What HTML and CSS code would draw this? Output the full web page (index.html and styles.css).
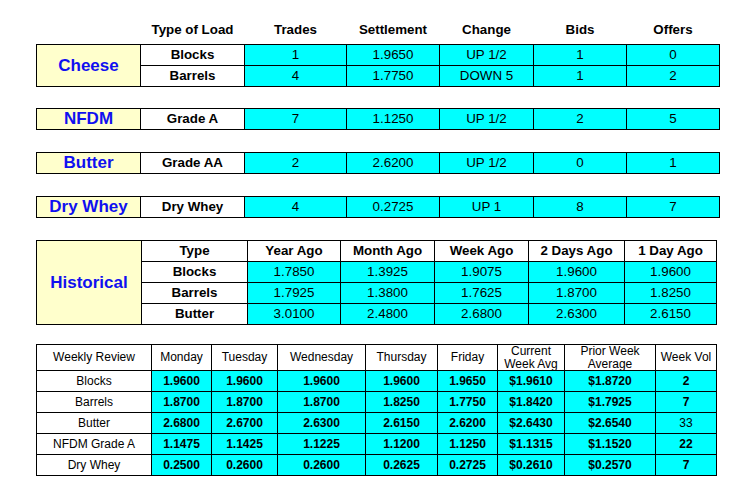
FILE: index.html
```html
<!DOCTYPE html>
<html>
<head>
<meta charset="utf-8">
<link rel="stylesheet" href="styles.css">
</head>
<body>
<div class="page">
  <table class="market">
    <colgroup>
      <col class="c-label"><col class="c-type"><col class="c-trades"><col class="c-settle"><col class="c-change"><col class="c-bids"><col class="c-offers">
    </colgroup>
    <thead>
      <tr class="head">
        <th></th><th>Type of Load</th><th>Trades</th><th>Settlement</th><th>Change</th><th>Bids</th><th>Offers</th>
      </tr>
    </thead>
    <tbody>
      <tr>
        <td class="label" rowspan="2">Cheese</td><td class="type">Blocks</td><td class="val">1</td><td class="val">1.9650</td><td class="val">UP 1/2</td><td class="val">1</td><td class="val">0</td>
      </tr>
      <tr>
        <td class="type">Barrels</td><td class="val">4</td><td class="val">1.7750</td><td class="val">DOWN 5</td><td class="val">1</td><td class="val">2</td>
      </tr>
    </tbody>
  </table>

  <table class="market gap first">
    <colgroup>
      <col class="c-label"><col class="c-type"><col class="c-trades"><col class="c-settle"><col class="c-change"><col class="c-bids"><col class="c-offers">
    </colgroup>
    <tr>
      <td class="label">NFDM</td><td class="type">Grade A</td><td class="val">7</td><td class="val">1.1250</td><td class="val">UP 1/2</td><td class="val">2</td><td class="val">5</td>
    </tr>
  </table>

  <table class="market gap">
    <colgroup>
      <col class="c-label"><col class="c-type"><col class="c-trades"><col class="c-settle"><col class="c-change"><col class="c-bids"><col class="c-offers">
    </colgroup>
    <tr>
      <td class="label">Butter</td><td class="type">Grade AA</td><td class="val">2</td><td class="val">2.6200</td><td class="val">UP 1/2</td><td class="val">0</td><td class="val">1</td>
    </tr>
  </table>

  <table class="market gap">
    <colgroup>
      <col class="c-label"><col class="c-type"><col class="c-trades"><col class="c-settle"><col class="c-change"><col class="c-bids"><col class="c-offers">
    </colgroup>
    <tr>
      <td class="label">Dry Whey</td><td class="type">Dry Whey</td><td class="val">4</td><td class="val">0.2725</td><td class="val">UP 1</td><td class="val">8</td><td class="val">7</td>
    </tr>
  </table>

  <table class="market hist gap">
    <colgroup>
      <col class="h-label"><col class="h-type"><col class="h-year"><col class="h-month"><col class="h-week"><col class="h-two"><col class="h-one">
    </colgroup>
    <tr>
      <td class="label" rowspan="4">Historical</td><th class="type">Type</th><th class="type">Year Ago</th><th class="type">Month Ago</th><th class="type">Week Ago</th><th class="type">2 Days Ago</th><th class="type">1 Day Ago</th>
    </tr>
    <tr>
      <td class="type">Blocks</td><td class="val">1.7850</td><td class="val">1.3925</td><td class="val">1.9075</td><td class="val">1.9600</td><td class="val">1.9600</td>
    </tr>
    <tr>
      <td class="type">Barrels</td><td class="val">1.7925</td><td class="val">1.3800</td><td class="val">1.7625</td><td class="val">1.8700</td><td class="val">1.8250</td>
    </tr>
    <tr>
      <td class="type">Butter</td><td class="val">3.0100</td><td class="val">2.4800</td><td class="val">2.6800</td><td class="val">2.6300</td><td class="val">2.6150</td>
    </tr>
  </table>

  <table class="weekly">
    <colgroup>
      <col class="w-label"><col class="w-mon"><col class="w-tue"><col class="w-wed"><col class="w-thu"><col class="w-fri"><col class="w-cur"><col class="w-prior"><col class="w-vol">
    </colgroup>
    <tr class="whead">
      <th>Weekly Review</th><th>Monday</th><th>Tuesday</th><th>Wednesday</th><th>Thursday</th><th>Friday</th><th>Current<br>Week Avg</th><th>Prior Week<br>Average</th><th>Week Vol</th>
    </tr>
    <tr>
      <td class="wl">Blocks</td><td class="wv">1.9600</td><td class="wv">1.9600</td><td class="wv">1.9600</td><td class="wv">1.9600</td><td class="wv">1.9650</td><td class="wv">$1.9610</td><td class="wv">$1.8720</td><td class="wv">2</td>
    </tr>
    <tr>
      <td class="wl">Barrels</td><td class="wv">1.8700</td><td class="wv">1.8700</td><td class="wv">1.8700</td><td class="wv">1.8250</td><td class="wv">1.7750</td><td class="wv">$1.8420</td><td class="wv">$1.7925</td><td class="wv">7</td>
    </tr>
    <tr>
      <td class="wl">Butter</td><td class="wv">2.6800</td><td class="wv">2.6700</td><td class="wv">2.6300</td><td class="wv">2.6150</td><td class="wv">2.6200</td><td class="wv">$2.6430</td><td class="wv">$2.6540</td><td class="wv plain">33</td>
    </tr>
    <tr>
      <td class="wl">NFDM Grade A</td><td class="wv">1.1475</td><td class="wv">1.1425</td><td class="wv">1.1225</td><td class="wv">1.1200</td><td class="wv">1.1250</td><td class="wv">$1.1315</td><td class="wv">$1.1520</td><td class="wv">22</td>
    </tr>
    <tr>
      <td class="wl">Dry Whey</td><td class="wv">0.2500</td><td class="wv">0.2600</td><td class="wv">0.2600</td><td class="wv">0.2625</td><td class="wv">0.2725</td><td class="wv">$0.2610</td><td class="wv">$0.2570</td><td class="wv">7</td>
    </tr>
  </table>
</div>
</body>
</html>
```

FILE: styles.css
```css
html, body {
  margin: 0;
  padding: 0;
  background: #ffffff;
}

body {
  font-family: "Liberation Sans", Arial, sans-serif;
  color: #000000;
}

.page {
  padding: 17px 0 0 36px;
  display: flex;
  flex-direction: column;
  align-items: flex-start;
}

table {
  border-collapse: collapse;
  table-layout: fixed;
}

.gap {
  margin-top: 22px;
}

.gap.first {
  margin-top: 21px;
}

.market {
  width: 683px;
  font-size: 13.33px;
}

.c-label { width: 104px; }
.c-type { width: 104px; }
.c-trades { width: 102px; }
.c-settle { width: 93px; }
.c-change { width: 94px; }
.c-bids { width: 93px; }
.c-offers { width: 93px; }

.market td,
.market th {
  border: 1px solid #000000;
  text-align: center;
  padding: 0;
  height: 20px;
  line-height: 16px;
}

.market .head th {
  border: none;
  height: 22px;
  font-weight: bold;
  vertical-align: top;
  padding-top: 5px;
}

.label {
  background: #ffffcc;
  color: #1010f0;
  font-weight: bold;
  font-size: 17px;
}

.type {
  background: #ffffff;
  font-weight: bold;
}

.val {
  background: #00ffff;
  font-weight: normal;
}

.hist {
  width: 680px;
}

.h-label { width: 105px; }
.h-type { width: 106px; }
.h-year { width: 93px; }
.h-month { width: 94px; }
.h-week { width: 94px; }
.h-two { width: 96px; }
.h-one { width: 92px; }

.weekly {
  width: 680px;
  margin-top: 19px;
  font-size: 12px;
}

.w-label { width: 115px; }
.w-mon { width: 60px; }
.w-tue { width: 66px; }
.w-wed { width: 88px; }
.w-thu { width: 72px; }
.w-fri { width: 60px; }
.w-cur { width: 67px; }
.w-prior { width: 91px; }
.w-vol { width: 61px; }

.weekly td,
.weekly th {
  border: 1px solid #000000;
  text-align: center;
  padding: 0;
  height: 20px;
  line-height: 14px;
}

.weekly .whead th {
  font-weight: normal;
  height: 23px;
  line-height: 12.5px;
  background: #ffffff;
}

.wl {
  background: #ffffff;
}

.wv {
  background: #00ffff;
  font-weight: bold;
}

.wv.plain {
  font-weight: normal;
}
```
